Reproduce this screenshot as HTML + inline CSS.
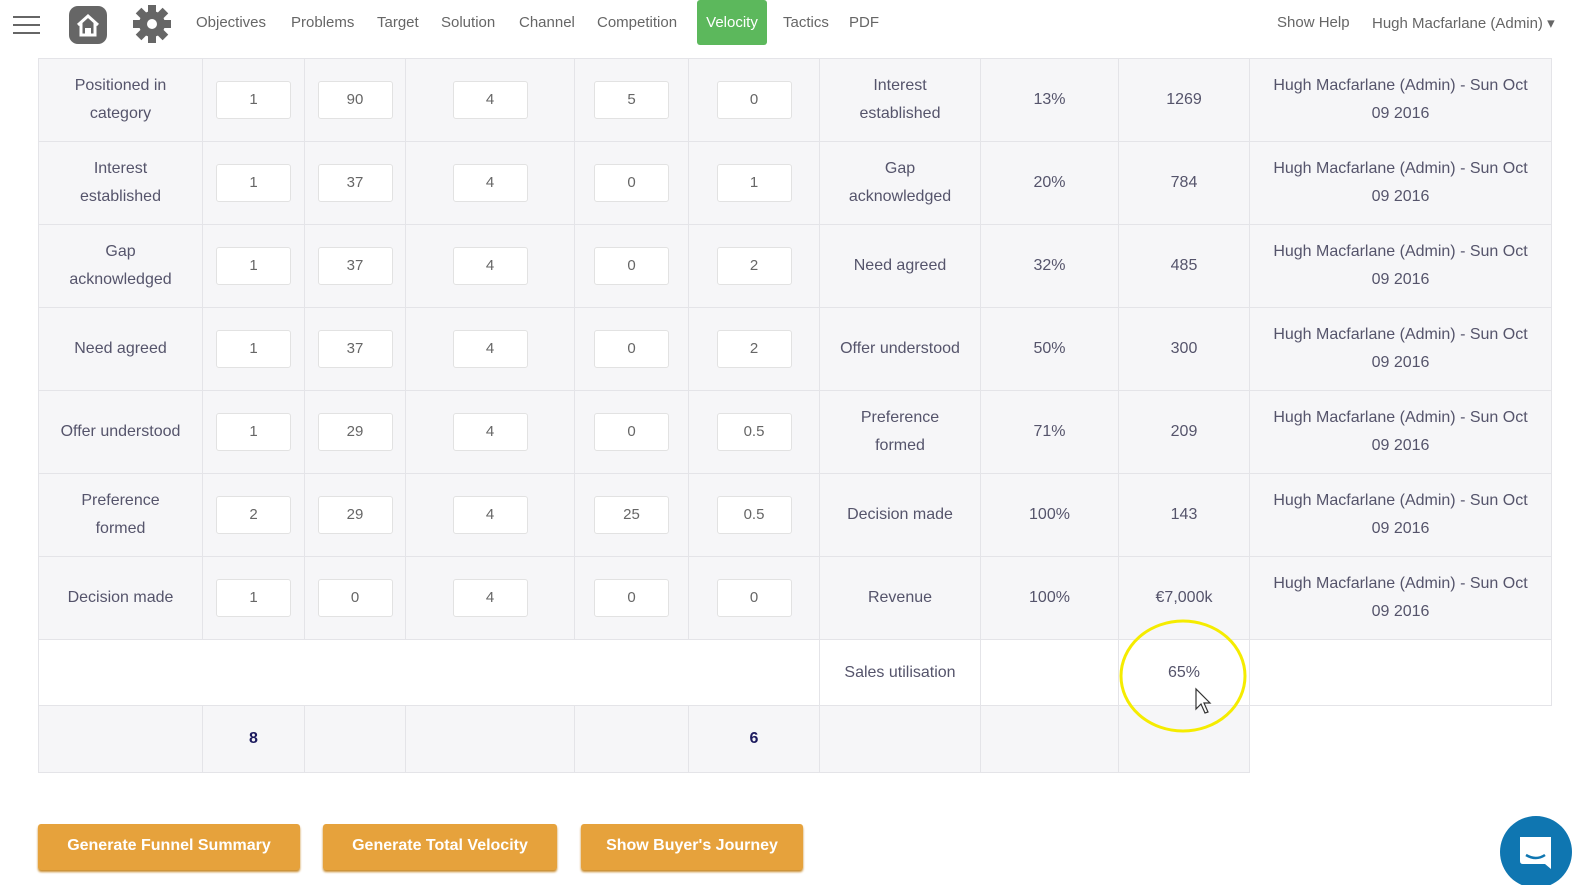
<!DOCTYPE html>
<html><head><meta charset="utf-8"><style>
*{box-sizing:border-box;margin:0;padding:0}
body{width:1593px;height:885px;overflow:hidden;background:#fff;font-family:"Liberation Sans",sans-serif;color:#4b4a63;position:relative}
.nav{position:absolute;top:0;left:0;width:1593px;height:46px}
.nav span{position:absolute;top:14px;font-size:15px;color:#666}
.vel{position:absolute;left:697px;top:0;width:70px;height:45px;background:#5cb85c;border-radius:3px;color:#fff !important;text-align:center;line-height:45px;top:0 !important}
table{position:absolute;left:38px;top:58px;border-collapse:collapse;table-layout:fixed}
td{border:1px solid #e4e4e8;background:#f6f6f8;text-align:center;font-size:16px;line-height:28px;height:83px;color:#55546b;padding:0 6px}
.in{display:inline-block;width:75px;height:38px;border:1px solid #e2e2e2;background:#fff;border-radius:3px;line-height:36px;font-size:15px;color:#666}
tr.w td{background:#fff;height:66px}
tr.t td{height:67px;font-weight:bold;color:#1c1a5e}
td.n{background:#fff;border:none}
.btn{position:absolute;top:824px;height:46px;background:#e6a23c;color:#fff;font-weight:bold;font-size:16px;text-align:center;line-height:44px;border-radius:3px;box-shadow:0 2px 2px #c88a2a}
</style></head><body>
<div class="nav">
<svg style="position:absolute;left:13px;top:15px" width="27" height="20"><rect y="1" width="27" height="2" fill="#666"/><rect y="9" width="27" height="2" fill="#666"/><rect y="17" width="27" height="2" fill="#666"/></svg>
<svg style="position:absolute;left:67px;top:4px" width="42" height="42" viewBox="0 0 42 42"><rect x="2" y="2" width="38" height="38" rx="9" fill="#666"/><path d="M11 21 L21 12 L31 21 M14 19 V31 H28 V19" fill="none" stroke="#fff" stroke-width="3"/><rect x="18" y="24" width="6" height="7" fill="#fff"/></svg>
<svg style="position:absolute;left:132px;top:4px" width="40" height="40" viewBox="0 0 40 40"><g fill="#666" transform="translate(20 20)"><circle r="13"/><rect x="-4" y="-19" width="8" height="38"/><rect x="-4" y="-19" width="8" height="38" transform="rotate(45)"/><rect x="-4" y="-19" width="8" height="38" transform="rotate(90)"/><rect x="-4" y="-19" width="8" height="38" transform="rotate(135)"/></g><circle cx="20" cy="20" r="5" fill="#fff"/></svg>
<span style="left:196px">Objectives</span><span style="left:291px">Problems</span><span style="left:377px">Target</span><span style="left:441px">Solution</span><span style="left:519px">Channel</span><span style="left:597px">Competition</span>
<span class="vel">Velocity</span>
<span style="left:783px">Tactics</span><span style="left:849px">PDF</span>
<span style="left:1277px">Show Help</span><span style="left:1372px">Hugh Macfarlane (Admin) ▾</span>
</div>
<table>
<colgroup><col style="width:164px"><col style="width:102px"><col style="width:101px"><col style="width:169px"><col style="width:114px"><col style="width:131px"><col style="width:161px"><col style="width:138px"><col style="width:131px"><col style="width:302px"></colgroup>
<tr><td>Positioned in<br>category</td><td><span class="in">1</span></td><td><span class="in">90</span></td><td><span class="in">4</span></td><td><span class="in">5</span></td><td><span class="in">0</span></td><td>Interest<br>established</td><td>13%</td><td>1269</td><td>Hugh Macfarlane (Admin) - Sun Oct<br>09 2016</td></tr>
<tr><td>Interest<br>established</td><td><span class="in">1</span></td><td><span class="in">37</span></td><td><span class="in">4</span></td><td><span class="in">0</span></td><td><span class="in">1</span></td><td>Gap<br>acknowledged</td><td>20%</td><td>784</td><td>Hugh Macfarlane (Admin) - Sun Oct<br>09 2016</td></tr>
<tr><td>Gap<br>acknowledged</td><td><span class="in">1</span></td><td><span class="in">37</span></td><td><span class="in">4</span></td><td><span class="in">0</span></td><td><span class="in">2</span></td><td>Need agreed</td><td>32%</td><td>485</td><td>Hugh Macfarlane (Admin) - Sun Oct<br>09 2016</td></tr>
<tr><td>Need agreed</td><td><span class="in">1</span></td><td><span class="in">37</span></td><td><span class="in">4</span></td><td><span class="in">0</span></td><td><span class="in">2</span></td><td>Offer understood</td><td>50%</td><td>300</td><td>Hugh Macfarlane (Admin) - Sun Oct<br>09 2016</td></tr>
<tr><td>Offer understood</td><td><span class="in">1</span></td><td><span class="in">29</span></td><td><span class="in">4</span></td><td><span class="in">0</span></td><td><span class="in">0.5</span></td><td>Preference<br>formed</td><td>71%</td><td>209</td><td>Hugh Macfarlane (Admin) - Sun Oct<br>09 2016</td></tr>
<tr><td>Preference<br>formed</td><td><span class="in">2</span></td><td><span class="in">29</span></td><td><span class="in">4</span></td><td><span class="in">25</span></td><td><span class="in">0.5</span></td><td>Decision made</td><td>100%</td><td>143</td><td>Hugh Macfarlane (Admin) - Sun Oct<br>09 2016</td></tr>
<tr><td>Decision made</td><td><span class="in">1</span></td><td><span class="in">0</span></td><td><span class="in">4</span></td><td><span class="in">0</span></td><td><span class="in">0</span></td><td>Revenue</td><td>100%</td><td>€7,000k</td><td>Hugh Macfarlane (Admin) - Sun Oct<br>09 2016</td></tr>
<tr class="w"><td colspan="6"></td><td>Sales utilisation</td><td></td><td>65%</td><td></td></tr>
<tr class="t"><td></td><td>8</td><td></td><td></td><td></td><td>6</td><td></td><td></td><td></td><td class="n"></td></tr>
</table>
<svg style="position:absolute;left:1118px;top:617px" width="130" height="118"><ellipse cx="65" cy="59" rx="62" ry="55" fill="none" stroke="#f5ec00" stroke-width="3"/><path d="M78 72 L78 92 L83 87 L87 96 L90 95 L86 86 L92 86 Z" fill="#fff" stroke="#333" stroke-width="1.2"/></svg>
<div class="btn" style="left:38px;width:262px">Generate Funnel Summary</div>
<div class="btn" style="left:323px;width:234px">Generate Total Velocity</div>
<div class="btn" style="left:581px;width:222px">Show Buyer's Journey</div>
<svg style="position:absolute;left:1500px;top:815px" width="74" height="70"><circle cx="36" cy="37" r="36" fill="#0f76b1"/><path d="M20 22 H51 V54 L45 49 H23 Q20 49 20 46 Z" fill="#fff"/><path d="M26 40 Q36 46 45 40" fill="none" stroke="#0f76b1" stroke-width="2.5"/></svg>
</body></html>
